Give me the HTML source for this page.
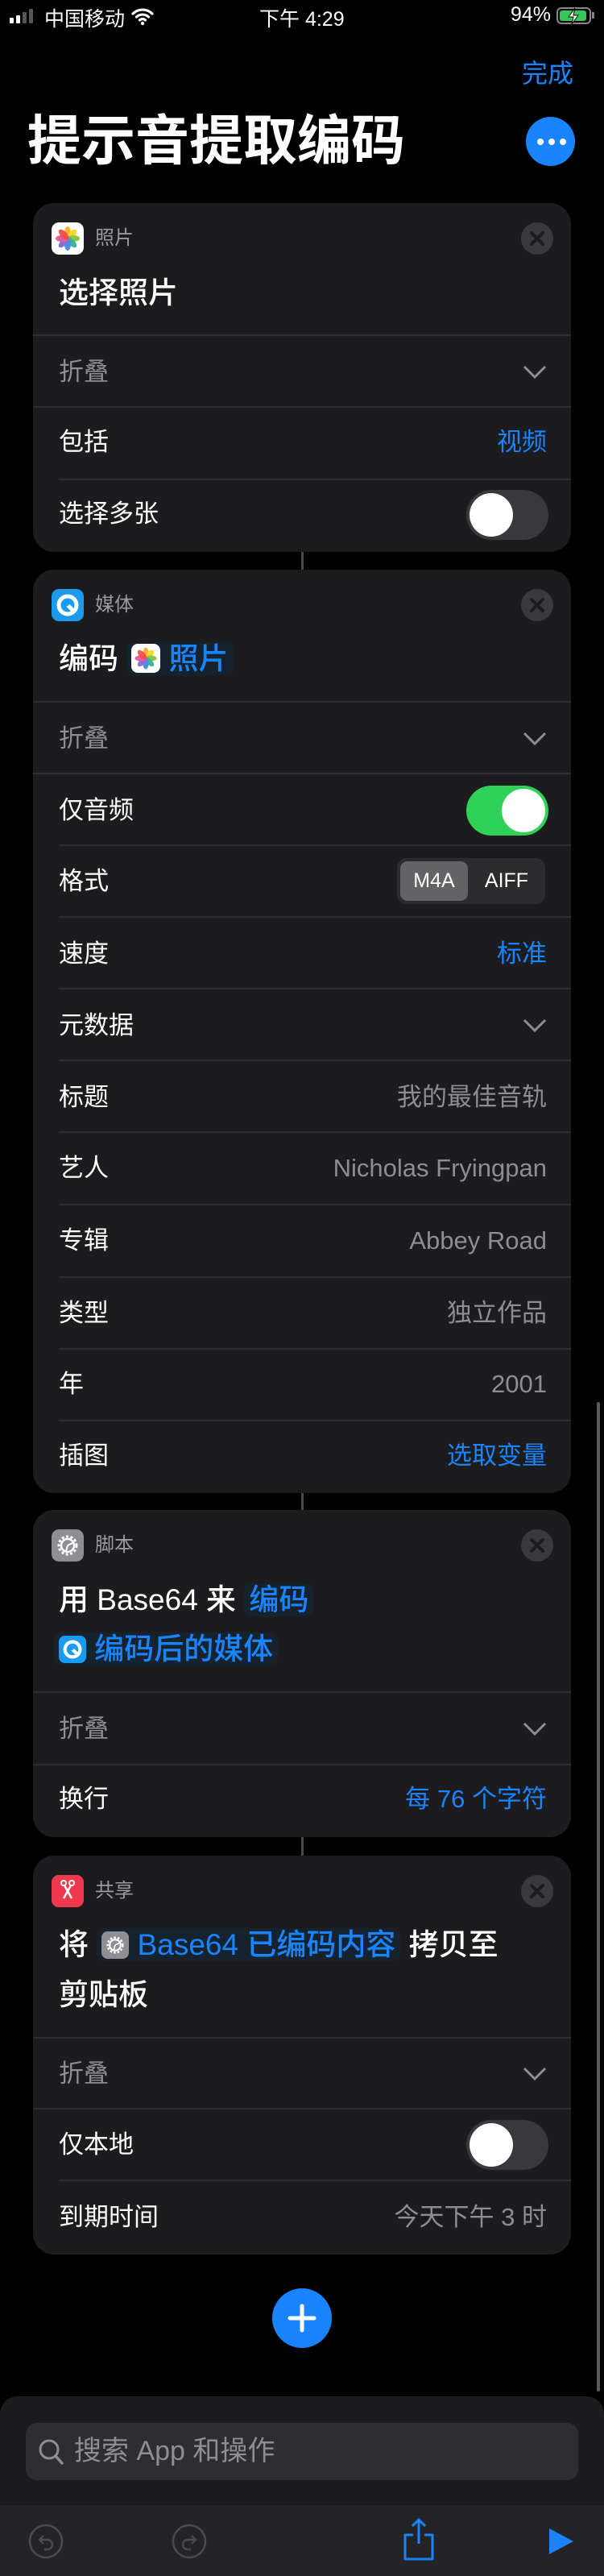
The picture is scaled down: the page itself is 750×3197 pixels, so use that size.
<!DOCTYPE html>
<html><head><meta charset="utf-8"><style>
*{margin:0;padding:0;box-sizing:border-box}
body{width:750px;height:3197px;background:#000;position:relative;overflow:hidden;font-family:"Liberation Sans","Noto Sans CJK SC",sans-serif;color:#fff}
.a{position:absolute}
.card{position:absolute;left:41px;width:668px;background:#1c1c1e;border-radius:26px}
.row{position:absolute;left:0;right:0;height:44px;line-height:44px;font-size:31px;padding-left:32px}
.row .r{position:absolute;right:30px;top:0;color:#8d8d92}
.blue{color:#1a84ff!important}
.fold{color:#8d8d92}
.div{position:absolute;right:0;height:2px;background:#2e2e31}
.hl{position:absolute;left:77px;font-size:24px;color:#9a9a9f;line-height:30px}
.ic{position:absolute;left:23px;width:40px;height:40px;border-radius:9px}
.x{position:absolute;right:22px;width:40px;height:40px;border-radius:50%;background:#3a3a3c}
.title{position:absolute;left:32px;font-size:37px;line-height:50px;white-space:nowrap;font-weight:500}
.pill{background:#17222f;border-radius:10px;padding:0 6px;color:#1a84ff}
.tg{position:absolute;right:28px;width:102px;height:62px;border-radius:31px;background:#39393d}
.tg i{position:absolute;top:4px;left:4px;width:54px;height:54px;border-radius:50%;background:#fff}
.conn{position:absolute;left:374px;width:3px;background:#4a4a4d}
.chev{position:absolute;right:30px;width:30px;height:20px}
</style></head><body>
<div class="a" style="left:12px;top:11px;display:flex;align-items:flex-end;gap:3px">
<div style="width:5px;height:7px;background:#fff;border-radius:1px"></div><div style="width:5px;height:10px;background:#fff;border-radius:1px"></div><div style="width:5px;height:14px;background:#555;border-radius:1px"></div><div style="width:5px;height:18px;background:#555;border-radius:1px"></div></div>
<div class="a" style="left:55px;top:4px;font-size:25px">中国移动</div>
<svg class="a" style="left:162px;top:8px" width="30" height="24" viewBox="0 0 30 24"><path d="M3 9a17 17 0 0 1 24 0M7.5 13a11 11 0 0 1 15 0M11.5 17a5 5 0 0 1 7 0" stroke="#fff" stroke-width="3.2" fill="none" stroke-linecap="round"/><circle cx="15" cy="21" r="2.2" fill="#fff"/></svg>
<div class="a" style="left:322px;top:4px;font-size:25px">下午 4:29</div>
<div class="a" style="left:634px;top:4px;font-size:25px">94%</div>
<div class="a" style="left:691px;top:9px;width:43px;height:21px;border:2px solid #888;border-radius:6px"><div style="position:absolute;left:2px;top:2px;width:33px;height:13px;background:#34c759;border-radius:3px"></div></div>
<div class="a" style="left:735px;top:15px;width:3px;height:8px;background:#888;border-radius:1px"></div>
<svg class="a" style="left:703px;top:9px" width="18" height="22" viewBox="0 0 18 22"><path d="M11 1L3 12h6l-2 9 8-11h-6z" fill="#fff" stroke="#000" stroke-width="1"/></svg>

<div class="a" style="left:648px;top:66px;font-size:32px;color:#1a84ff">完成</div>
<div class="a" style="left:34px;top:136px;font-size:67px;font-weight:bold;line-height:80px">提示音提取编码</div>
<div class="a" style="left:653px;top:145px;width:61px;height:61px;border-radius:50%;background:#1a84ff"><div style="position:absolute;top:27px;left:14px;display:flex;gap:6px"><i style="width:8px;height:8px;border-radius:50%;background:#fff;display:block"></i><i style="width:8px;height:8px;border-radius:50%;background:#fff;display:block"></i><i style="width:8px;height:8px;border-radius:50%;background:#fff;display:block"></i></div></div>

<svg width="0" height="0" style="position:absolute"><defs>
<g id="flower"><rect width="40" height="40" rx="9" fill="#fff"/><g transform="translate(20 20)">
<ellipse rx="4" ry="8" cy="-7" fill="#f9b233"/><ellipse rx="4" ry="8" cy="-7" fill="#fcd72a" transform="rotate(45)"/><ellipse rx="4" ry="8" cy="-7" fill="#8cc63f" transform="rotate(90)"/><ellipse rx="4" ry="8" cy="-7" fill="#3cb4a0" transform="rotate(135)"/><ellipse rx="4" ry="8" cy="-7" fill="#4a8fe0" transform="rotate(180)"/><ellipse rx="4" ry="8" cy="-7" fill="#8e6fd8" transform="rotate(225)"/><ellipse rx="4" ry="8" cy="-7" fill="#e25c9f" transform="rotate(270)"/><ellipse rx="4" ry="8" cy="-7" fill="#ef4b3f" transform="rotate(315)" opacity=".9"/></g></g>
<g id="media"><rect width="40" height="40" rx="9" fill="#1a9bf0"/><circle cx="20" cy="20" r="11" fill="none" stroke="#fff" stroke-width="5"/><path d="M20 20l8 8" stroke="#fff" stroke-width="5"/><path d="M19 21l5-6" stroke="#1a9bf0" stroke-width="2"/></g>
<g id="gear"><rect width="40" height="40" rx="9" fill="#8e8e93"/><circle cx="20" cy="20" r="11" fill="none" stroke="#fff" stroke-width="3" stroke-dasharray="3 2.5"/><circle cx="20" cy="20" r="8" fill="none" stroke="#fff" stroke-width="2.5"/><path d="M20 20l6-3M20 20l-2 7" stroke="#fff" stroke-width="2"/></g>
</defs></svg>

<div class="card" style="top:252px;height:433px">
<svg class="ic" style="top:24px" viewBox="0 0 40 40"><use href="#flower"/></svg>
<div class="hl" style="top:29px">照片</div>
<div class="x" style="top:24px"><svg width="40" height="40"><path d="M13 13l14 14M27 13L13 27" stroke="#1c1c1e" stroke-width="4" stroke-linecap="round"/></svg></div>
<div class="title" style="top:87px">选择照片</div>
<div class="div" style="top:163px;left:0"></div>
<div class="row fold" style="top:188px">折叠</div>
<svg class="chev" style="top:200px" viewBox="0 0 30 20"><path d="M2 3l13 13L28 3" stroke="#8d8d92" stroke-width="3" fill="none"/></svg>
<div class="div" style="top:252px;left:0"></div>
<div class="row" style="top:275px">包括<span class="r blue">视频</span></div>
<div class="div" style="top:342px;left:32px"></div>
<div class="row" style="top:364px">选择多张</div>
<div class="tg" style="top:356px"><i></i></div>
</div>
<div class="conn" style="top:685px;height:22px"></div>

<div class="card" style="top:707px;height:1146px">
<svg class="ic" style="top:24px" viewBox="0 0 40 40"><use href="#media"/></svg>
<div class="hl" style="top:29px">媒体</div>
<div class="x" style="top:24px"><svg width="40" height="40"><path d="M13 13l14 14M27 13L13 27" stroke="#1c1c1e" stroke-width="4" stroke-linecap="round"/></svg></div>
<div class="title" style="top:86px">编码 <span class="pill"><svg width="36" height="36" viewBox="0 0 40 40" style="vertical-align:-5px"><use href="#flower"/></svg> 照片</span></div>
<div class="div" style="top:163px;left:0"></div>
<div class="row fold" style="top:188px">折叠</div>
<svg class="chev" style="top:200px" viewBox="0 0 30 20"><path d="M2 3l13 13L28 3" stroke="#8d8d92" stroke-width="3" fill="none"/></svg>
<div class="div" style="top:252px;left:0"></div>
<div class="row" style="top:277px">仅音频</div>
<div class="tg" style="top:268px;background:#30d158"><i style="left:44px"></i></div>
<div class="div" style="top:341px;left:32px"></div>
<div class="row" style="top:365px">格式</div>
<div class="a" style="right:32px;top:358px;width:184px;height:57px;border-radius:12px;background:#2c2c2e"><div style="position:absolute;left:4px;top:4px;width:84px;height:49px;border-radius:9px;background:#636366"></div><div style="position:absolute;left:4px;top:4px;width:84px;line-height:49px;text-align:center;font-size:25px">M4A</div><div style="position:absolute;left:92px;top:4px;width:88px;line-height:49px;text-align:center;font-size:25px">AIFF</div></div>
<div class="div" style="top:430px;left:32px"></div>
<div class="row" style="top:455px">速度<span class="r blue">标准</span></div>
<div class="div" style="top:519px;left:32px"></div>
<div class="row" style="top:544px">元数据</div>
<svg class="chev" style="top:556px" viewBox="0 0 30 20"><path d="M2 3l13 13L28 3" stroke="#8d8d92" stroke-width="3" fill="none"/></svg>
<div class="div" style="top:608px;left:32px"></div>
<div class="row" style="top:633px">标题<span class="r">我的最佳音轨</span></div>
<div class="div" style="top:697px;left:32px"></div>
<div class="row" style="top:721px">艺人<span class="r">Nicholas Fryingpan</span></div>
<div class="div" style="top:787px;left:32px"></div>
<div class="row" style="top:811px">专辑<span class="r">Abbey Road</span></div>
<div class="div" style="top:877px;left:32px"></div>
<div class="row" style="top:901px">类型<span class="r">独立作品</span></div>
<div class="div" style="top:966px;left:32px"></div>
<div class="row" style="top:989px">年<span class="r">2001</span></div>
<div class="div" style="top:1055px;left:32px"></div>
<div class="row" style="top:1078px">插图<span class="r blue">选取变量</span></div>
</div>
<div class="conn" style="top:1853px;height:21px"></div>

<div class="card" style="top:1874px;height:406px">
<svg class="ic" style="top:24px" viewBox="0 0 40 40"><use href="#gear"/></svg>
<div class="hl" style="top:29px">脚本</div>
<div class="x" style="top:24px"><svg width="40" height="40"><path d="M13 13l14 14M27 13L13 27" stroke="#1c1c1e" stroke-width="4" stroke-linecap="round"/></svg></div>
<div class="title" style="top:87px">用 Base64 来 <span class="pill">编码</span></div>
<div class="title" style="top:148px"><span class="pill" style="margin-left:-6px"><svg width="34" height="34" viewBox="0 0 40 40" style="vertical-align:-5px"><use href="#media"/></svg> 编码后的媒体</span></div>
<div class="div" style="top:225px;left:0"></div>
<div class="row fold" style="top:250px">折叠</div>
<svg class="chev" style="top:262px" viewBox="0 0 30 20"><path d="M2 3l13 13L28 3" stroke="#8d8d92" stroke-width="3" fill="none"/></svg>
<div class="div" style="top:315px;left:0"></div>
<div class="row" style="top:337px">换行<span class="r blue">每 76 个字符</span></div>
</div>
<div class="conn" style="top:2280px;height:23px"></div>

<div class="card" style="top:2303px;height:495px">
<div class="ic" style="top:24px;background:#f0394f"><svg width="40" height="40"><circle cx="15" cy="10" r="3" fill="none" stroke="#fff" stroke-width="2"/><circle cx="25" cy="10" r="3" fill="none" stroke="#fff" stroke-width="2"/><path d="M16 13l9 16M24 13l-9 16" stroke="#fff" stroke-width="2.5"/></svg></div>
<div class="hl" style="top:29px">共享</div>
<div class="x" style="top:24px"><svg width="40" height="40"><path d="M13 13l14 14M27 13L13 27" stroke="#1c1c1e" stroke-width="4" stroke-linecap="round"/></svg></div>
<div class="title" style="top:86px">将 <span class="pill"><svg width="34" height="34" viewBox="0 0 40 40" style="vertical-align:-5px"><use href="#gear"/></svg> Base64 已编码内容</span> 拷贝至</div>
<div class="title" style="top:148px">剪贴板</div>
<div class="div" style="top:225px;left:0"></div>
<div class="row fold" style="top:249px">折叠</div>
<svg class="chev" style="top:261px" viewBox="0 0 30 20"><path d="M2 3l13 13L28 3" stroke="#8d8d92" stroke-width="3" fill="none"/></svg>
<div class="div" style="top:313px;left:0"></div>
<div class="row" style="top:337px">仅本地</div>
<div class="tg" style="top:328px"><i></i></div>
<div class="div" style="top:402px;left:32px"></div>
<div class="row" style="top:427px">到期时间<span class="r">今天下午 3 时</span></div>
</div>

<div class="a" style="left:338px;top:2840px;width:74px;height:74px;border-radius:50%;background:#1a84ff"><svg width="74" height="74"><path d="M37 22v30M22 37h30" stroke="#fff" stroke-width="5" stroke-linecap="round"/></svg></div>

<div class="a" style="left:741px;top:1740px;width:4px;height:1228px;background:#5a5a5e;border-radius:2px"></div>

<div class="a" style="left:0;top:2974px;width:750px;height:223px;background:#1c1c1e;border-radius:22px 22px 0 0"></div>
<div class="a" style="left:32px;top:3007px;width:686px;height:71px;border-radius:14px;background:#2e2e31"></div>
<svg class="a" style="left:46px;top:3025px" width="34" height="36"><circle cx="15" cy="15" r="11" fill="none" stroke="#8d8d92" stroke-width="3"/><path d="M23 23l8 9" stroke="#8d8d92" stroke-width="3.5" stroke-linecap="round"/></svg>
<div class="a" style="left:92px;top:3020px;font-size:34px;color:#8d8d92;line-height:44px">搜索 App 和操作</div>
<div class="a" style="left:0;top:3109px;width:750px;height:88px;background:#242427"></div>
<svg class="a" style="left:34px;top:3131px" width="46" height="46"><circle cx="23" cy="23" r="20" fill="none" stroke="#4a4a4d" stroke-width="2.5"/><path d="M20 16l-5 5 5 5M15 21h10a6 6 0 0 1 0 12h-4" fill="none" stroke="#4a4a4d" stroke-width="2.5"/></svg>
<svg class="a" style="left:212px;top:3131px" width="46" height="46"><circle cx="23" cy="23" r="20" fill="none" stroke="#4a4a4d" stroke-width="2.5"/><path d="M26 16l5 5-5 5M31 21H21a6 6 0 0 0 0 12h4" fill="none" stroke="#4a4a4d" stroke-width="2.5"/></svg>
<svg class="a" style="left:500px;top:3124px" width="40" height="56"><path d="M20 3v30M12 11l8-8 8 8M13 22H3v30h34V22H27" fill="none" stroke="#1a84ff" stroke-width="3" stroke-linejoin="round"/></svg>
<svg class="a" style="left:680px;top:3136px" width="34" height="36"><path d="M2 2l30 16L2 34z" fill="#1a84ff"/></svg>
</body></html>
